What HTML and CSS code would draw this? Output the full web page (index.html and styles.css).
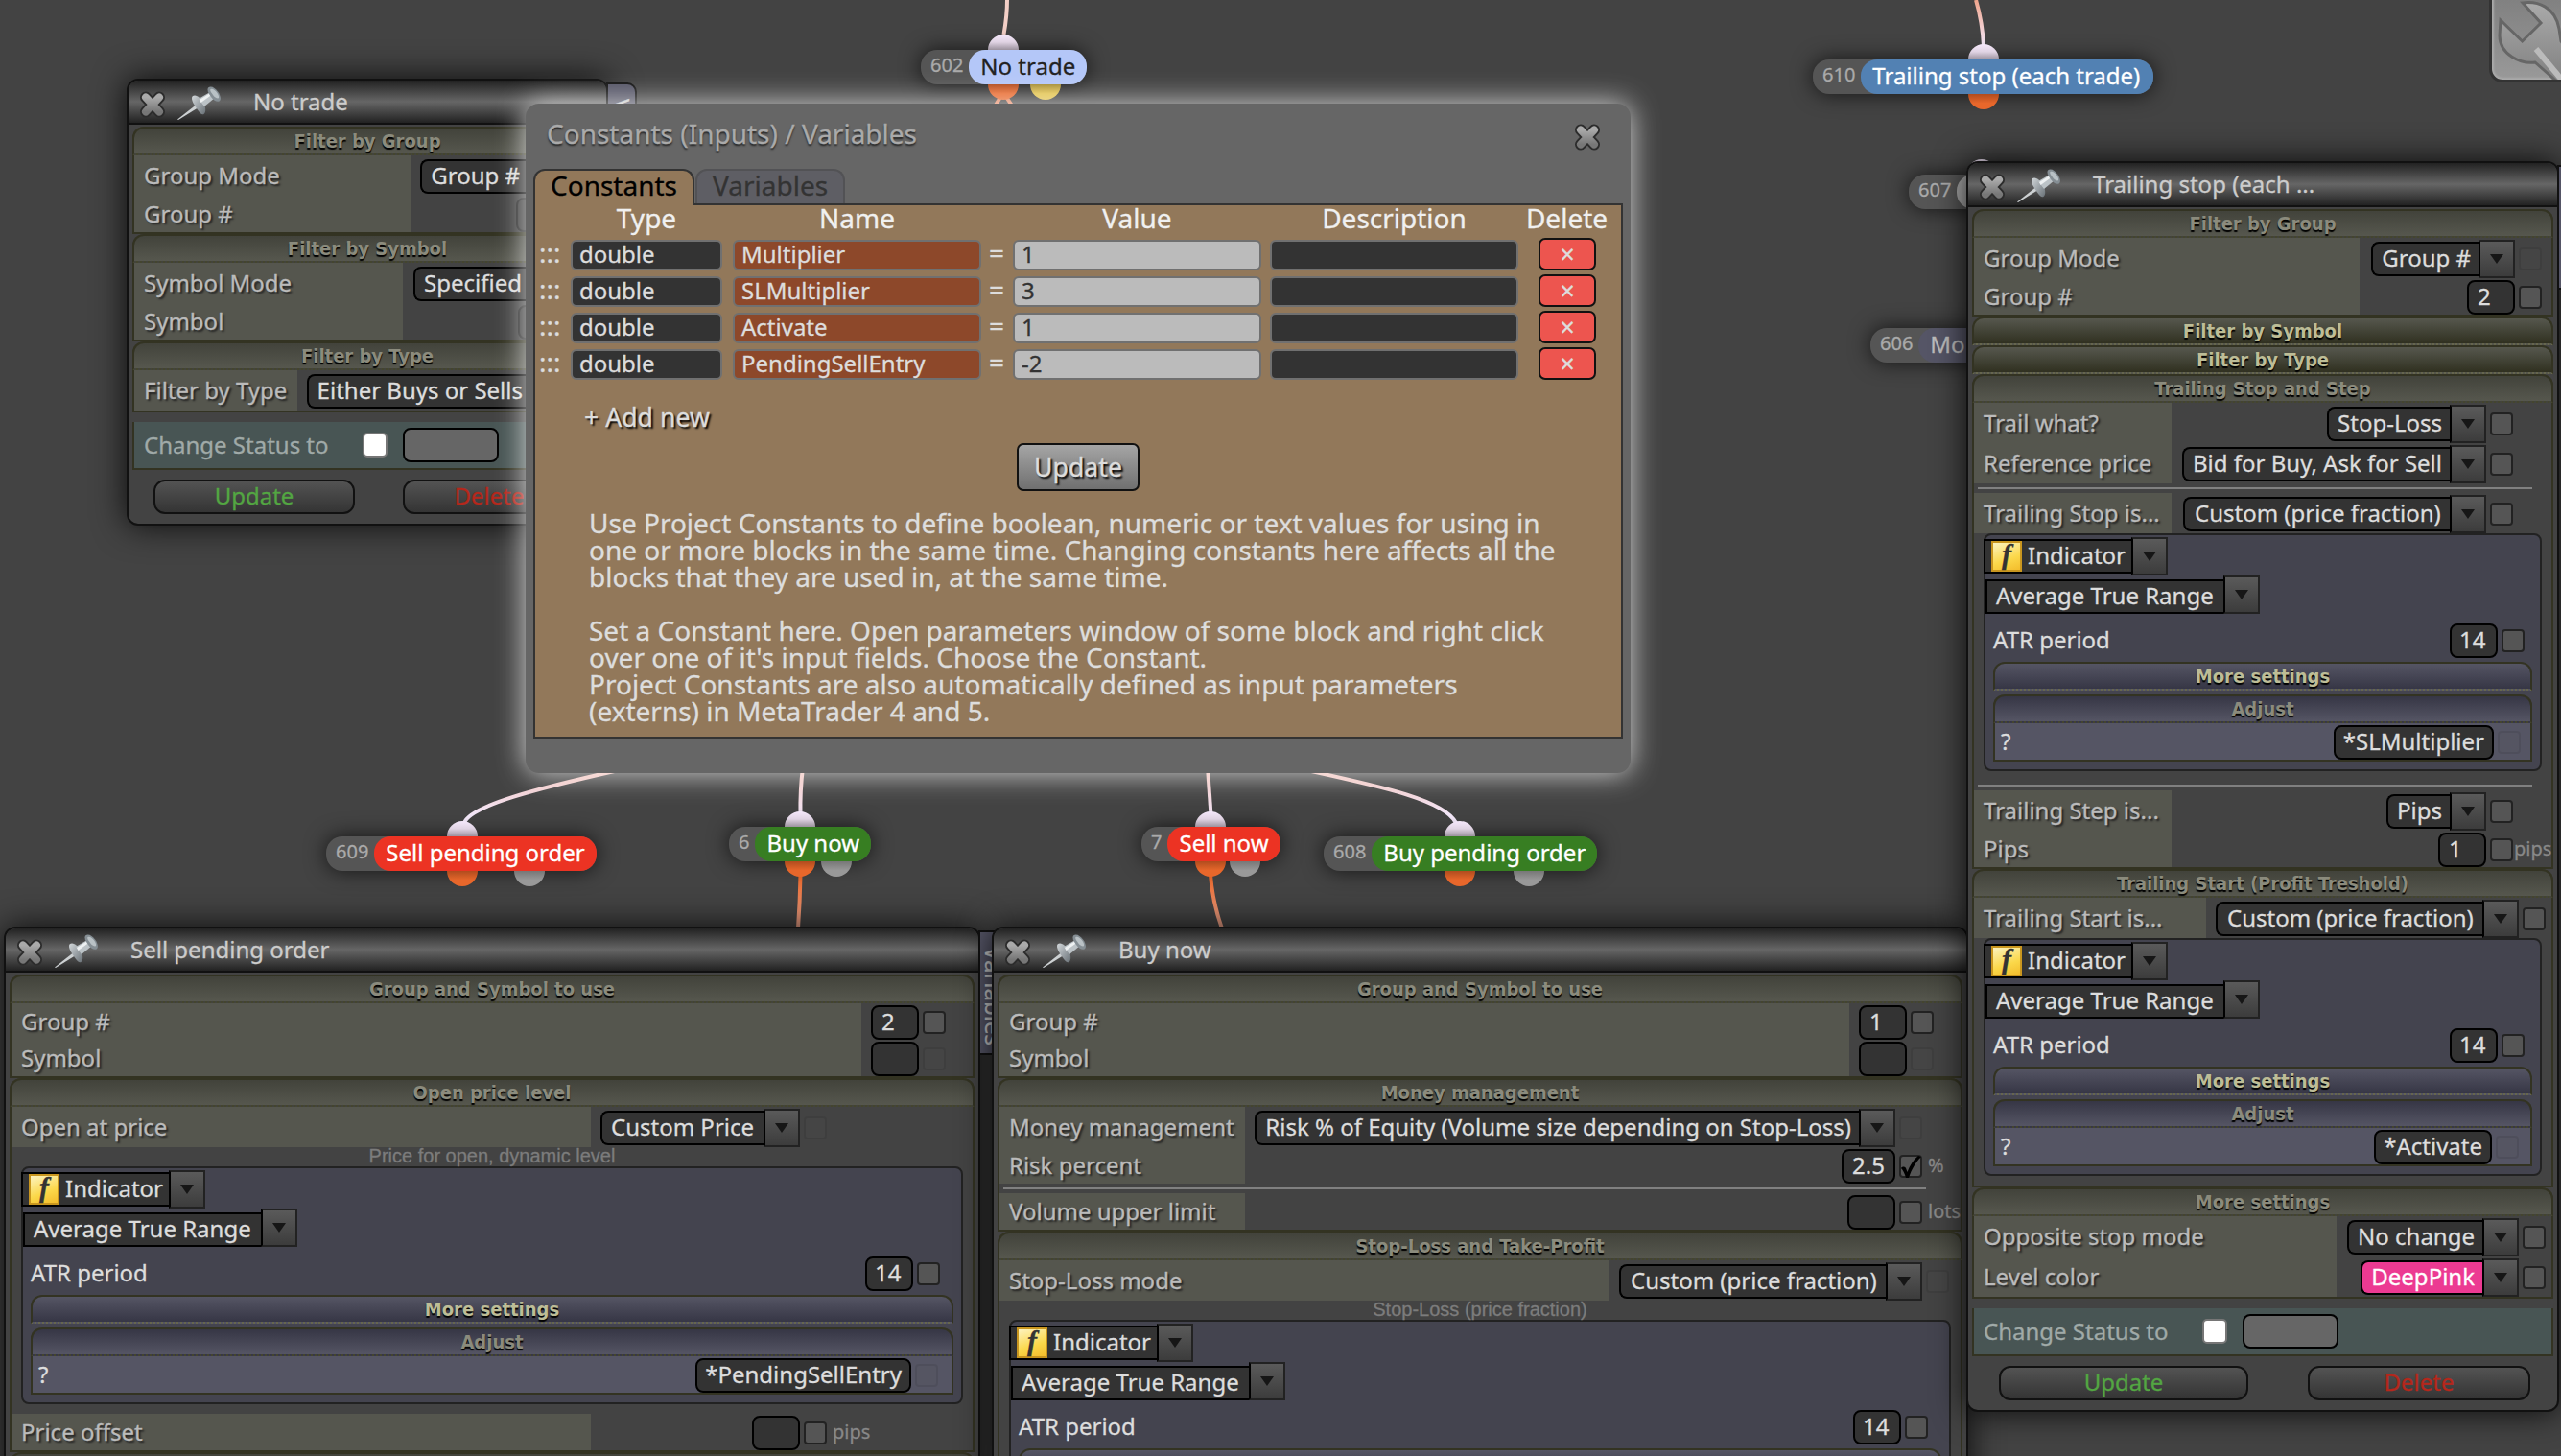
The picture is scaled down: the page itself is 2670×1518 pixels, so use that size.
FILE: index.html
```html
<!DOCTYPE html>
<html lang="en">
<head>
  <meta charset="UTF-8" />
  <title>Constants (Inputs) / Variables</title>
  <link rel="stylesheet" href="styles.css">
</head>
<body>
<div class="canvas">

  <svg class="defs" width="0" height="0">
    <defs>
      <linearGradient id="metal" x1="0" y1="0" x2="0" y2="1">
        <stop offset="0" stop-color="#aaa"/><stop offset="1" stop-color="#777"/>
      </linearGradient>
      <linearGradient id="pin-metal" x1="0" y1="0" x2="1" y2="1">
        <stop offset="0" stop-color="#d3d8db"/><stop offset="1" stop-color="#687076"/>
      </linearGradient>
      <linearGradient id="wire-in" x1="0" y1="0" x2="0" y2="1">
        <stop offset="0" stop-color="#f0a58c"/><stop offset="1" stop-color="#f4e8fa"/>
      </linearGradient>
      <linearGradient id="wire-mid" gradientUnits="userSpaceOnUse" x1="0" y1="790" x2="0" y2="850">
        <stop offset="0" stop-color="#f0b5a5"/><stop offset="1" stop-color="#f4e8fa"/>
      </linearGradient>
      <linearGradient id="wire-out" gradientUnits="userSpaceOnUse" x1="0" y1="914" x2="0" y2="966">
        <stop offset="0" stop-color="#e8672b"/><stop offset="1" stop-color="#f0a58c"/>
      </linearGradient>
    </defs>
    <symbol id="close" viewBox="0 0 30 30">
      <path d="M8 7.500 22 22.500M22 7.500 8 22.500" fill="none" stroke="#2c2c2c" stroke-width="12" stroke-linecap="round"/>
      <path d="M8 7.500 22 22.500M22 7.500 8 22.500" fill="none" stroke="url(#metal)" stroke-width="8" stroke-linecap="round"/>
    </symbol>
    <symbol id="pin" viewBox="0 0 46 36">
      <path d="M1 34.500 22 18l2.500 3L2 35z" fill="#cdd1d3"/>
      <path d="M16.500 10.500c3-2.500 7 0 10.500 5s4.500 11 1.500 13.500c-2 1-4-1-6.500-4.500-3-4-7.500-11-5.500-14z" fill="url(#pin-metal)"/>
      <path d="M23 13 35 6l5 6-11 9z" fill="#bcc3c7"/>
      <path d="M24 14 35 7l1.500 2-11 8z" fill="#eef1f2"/>
      <path d="M33 1.500c3-2.500 7 0 10 4s4 8.500 1.500 10c-3 1-6-1-8.500-4.500s-4.500-7-3-9.500z" fill="#858e94"/>
      <path d="M35.500 3c2-1 5 1 7 4s2 5 1 5.500-4-1-5.500-3.500-3.500-4.500-2.500-6z" fill="#b9c1c5"/>
    </symbol>
    <symbol id="check" viewBox="0 0 24 24">
      <path d="M2 13c1-2 4-2 5 0l1.500 4C11 10 15 4 20 0l3 1C17 7 13 14 10 23H7C6 19 4 15 2 13z"/>
    </symbol>
  </svg>

  <!-- wires between the blocks -->
  <svg class="wires" width="2670" height="1518">
    <path d="M1050 0Q1050 16 1046.500 36" stroke="#f3cfc6"/>
    <path d="M1045 98 1034 116M1047 98 1059 116" stroke="#f0906a"/>
    <path d="M2060 0Q2067 24 2068 48" stroke="url(#wire-in)"/>
    <path d="M645 803C560 822 490 840 484 858" stroke="url(#wire-mid)"/>
    <path d="M837 800Q834 824 834.500 850" stroke="url(#wire-mid)"/>
    <path d="M1259 800 1262.500 850" stroke="url(#wire-mid)"/>
    <path d="M1362 803C1440 820 1506 834 1518 858" stroke="url(#wire-mid)"/>
    <path d="M834.500 912Q834 940 832 968" stroke="url(#wire-out)"/>
    <path d="M1262 912Q1264 940 1274 968" stroke="url(#wire-out)"/>
  </svg>

  <div class="node n602"><i class="port in"></i><i class="port out"></i><i class="port yellow"></i><span class="num">602</span><span class="name lightblue">No trade</span></div>
  <div class="node n610"><i class="port in"></i><i class="port out"></i><span class="num">610</span><span class="name blue">Trailing stop (each trade)</span></div>
  <div class="node n607"><i class="port in"></i><span class="num">607</span><span class="name gray"></span></div>
  <div class="node n606"><span class="num">606</span><span class="name slate">Mo</span></div>
  <div class="node n609"><i class="port in"></i><i class="port out"></i><i class="port off"></i><span class="num">609</span><span class="name red">Sell pending order</span></div>
  <div class="node n6"><i class="port in"></i><i class="port out"></i><i class="port off"></i><span class="num">6</span><span class="name green">Buy now</span></div>
  <div class="node n7"><i class="port in"></i><i class="port out"></i><i class="port off"></i><span class="num">7</span><span class="name red">Sell now</span></div>
  <div class="node n608"><i class="port in"></i><i class="port out"></i><i class="port off"></i><span class="num">608</span><span class="name green">Buy pending order</span></div>

  <div class="tools">
    <svg width="110" height="90" viewBox="0 0 110 90">
      <path d="M9 20 31.600 42 51 23 32 2C48 0 66 6 70 29l2 13 30 40-16 20-24-23-17-15C30 66 8 56 8 36z" fill="url(#metal)" stroke="#666" stroke-width="3"/>
      <path d="M46 50 86 98" stroke="#bbb" stroke-width="6"/>
    </svg>
  </div>

  <!-- No trade -->
  <div class="window w-notrade">
    <div class="side-tab">Variables</div>
    <div class="window-body">
      <div class="titlebar"><svg class="close"><use href="#close"/></svg><svg class="pin"><use href="#pin"/></svg><span>No trade</span></div>
      <div class="section s1">
        <div class="head">Filter by Group</div>
        <div class="row sel"><label>Group Mode</label><div class="ctl"><div class="select"><span>Group #</span><b></b></div><i class="cb off"></i></div><em></em></div>
        <div class="row"><label>Group #</label><div class="ctl"><span class="field disabled"></span><i class="cb off"></i></div><em></em></div>
      </div>
      <div class="section s2">
        <div class="head">Filter by Symbol</div>
        <div class="row sel"><label>Symbol Mode</label><div class="ctl"><div class="select"><span>Specified</span><b></b></div><i class="cb off"></i></div><em></em></div>
        <div class="row"><label>Symbol</label><div class="ctl"><span class="field disabled"></span><i class="cb off"></i></div><em></em></div>
      </div>
      <div class="section s3">
        <div class="head">Filter by Type</div>
        <div class="row sel"><label>Filter by Type</label><div class="ctl"><div class="select"><span>Either Buys or Sells</span><b></b></div><i class="cb off"></i></div><em></em></div>
      </div>
      <div class="status"><label>Change Status to</label><i class="white-cb"></i><span class="status-box"></span></div>
      <div class="buttons"><button class="update">Update</button><button class="delete">Delete</button></div>
    </div>
  </div>

  <!-- Sell pending order -->
  <div class="window w-sell">
    <div class="side-tab">Variables</div>
    <div class="window-body">
      <div class="titlebar"><svg class="close"><use href="#close"/></svg><svg class="pin"><use href="#pin"/></svg><span>Sell pending order</span></div>
      <div class="section group">
        <div class="head">Group and Symbol to use</div>
        <div class="row"><label>Group #</label><div class="ctl"><span class="field">2</span><i class="cb"></i></div><em></em></div>
        <div class="row"><label>Symbol</label><div class="ctl"><span class="field"></span><i class="cb off"></i></div><em></em></div>
      </div>
      <div class="section price">
        <div class="head">Open price level</div>
        <div class="row sel"><label>Open at price</label><div class="ctl"><div class="select"><span class="custom">Custom Price</span><b></b></div><i class="cb off"></i></div><em></em></div>
        <div class="caption">Price for open, dynamic level</div>
        <div class="indicator">
          <div class="pick first"><div class="select"><span class="ind"><i class="fx">f</i>Indicator</span><b></b></div></div>
          <div class="pick"><div class="select"><span class="atr">Average True Range</span><b></b></div></div>
          <div class="row period"><label>ATR period</label><div class="ctl"><span class="field">14</span><i class="cb"></i></div></div>
          <div class="head closed">More settings</div>
          <div class="adjust">
            <div class="head">Adjust</div>
            <div class="row"><label>?</label><div class="ctl"><span class="field const">*PendingSellEntry</span><i class="cb off"></i></div></div>
          </div>
        </div>
        <div class="row"><label>Price offset</label><div class="ctl"><span class="field"></span><i class="cb"></i></div><em>pips</em></div>
      </div>
      <div class="section"><div class="head"></div></div>
    </div>
  </div>

  <!-- Buy now -->
  <div class="window w-buy">
    <div class="window-body">
      <div class="titlebar"><svg class="close"><use href="#close"/></svg><svg class="pin"><use href="#pin"/></svg><span>Buy now</span></div>
      <div class="section group">
        <div class="head">Group and Symbol to use</div>
        <div class="row"><label>Group #</label><div class="ctl"><span class="field">1</span><i class="cb"></i></div><em></em></div>
        <div class="row"><label>Symbol</label><div class="ctl"><span class="field"></span><i class="cb off"></i></div><em></em></div>
      </div>
      <div class="section money">
        <div class="head">Money management</div>
        <div class="row sel"><label>Money management</label><div class="ctl"><div class="select"><span>Risk % of Equity (Volume size depending on Stop-Loss)</span><b></b></div><i class="cb off"></i></div><em></em></div>
        <div class="row"><label>Risk percent</label><div class="ctl"><span class="field">2.5</span><i class="cb"><svg><use href="#check"/></svg></i></div><em>%</em></div>
        <hr>
        <div class="row"><label>Volume upper limit</label><div class="ctl"><span class="field"></span><i class="cb"></i></div><em>lots</em></div>
      </div>
      <div class="section stoploss">
        <div class="head">Stop-Loss and Take-Profit</div>
        <div class="row sel"><label>Stop-Loss mode</label><div class="ctl"><div class="select"><span class="fraction">Custom (price fraction)</span><b></b></div><i class="cb off"></i></div><em></em></div>
        <div class="caption">Stop-Loss (price fraction)</div>
        <div class="indicator">
          <div class="pick first"><div class="select"><span class="ind"><i class="fx">f</i>Indicator</span><b></b></div></div>
          <div class="pick"><div class="select"><span class="atr">Average True Range</span><b></b></div></div>
          <div class="row period"><label>ATR period</label><div class="ctl"><span class="field">14</span><i class="cb"></i></div></div>
          <div class="head closed"></div>
        </div>
      </div>
    </div>
  </div>

  <!-- Trailing stop -->
  <div class="window w-trail">
    <div class="side-tab"></div>
    <div class="window-body">
      <div class="titlebar"><svg class="close"><use href="#close"/></svg><svg class="pin"><use href="#pin"/></svg><span>Trailing stop (each ...</span></div>
      <div class="section t1">
        <div class="head">Filter by Group</div>
        <div class="row sel"><label>Group Mode</label><div class="ctl"><div class="select"><span>Group #</span><b></b></div><i class="cb off"></i></div><em></em></div>
        <div class="row"><label>Group #</label><div class="ctl"><span class="field">2</span><i class="cb"></i></div><em></em></div>
      </div>
      <div class="head closed">Filter by Symbol</div>
      <div class="head closed">Filter by Type</div>
      <div class="section t2">
        <div class="head">Trailing Stop and Step</div>
        <div class="row sel"><label>Trail what?</label><div class="ctl"><div class="select"><span>Stop-Loss</span><b></b></div><i class="cb"></i></div><em></em></div>
        <div class="row sel"><label>Reference price</label><div class="ctl"><div class="select"><span>Bid for Buy, Ask for Sell</span><b></b></div><i class="cb"></i></div><em></em></div>
        <hr>
        <div class="row sel"><label>Trailing Stop is...</label><div class="ctl"><div class="select"><span class="fraction">Custom (price fraction)</span><b></b></div><i class="cb"></i></div><em></em></div>
        <div class="indicator">
          <div class="pick first"><div class="select"><span class="ind"><i class="fx">f</i>Indicator</span><b></b></div></div>
          <div class="pick"><div class="select"><span class="atr">Average True Range</span><b></b></div></div>
          <div class="row period"><label>ATR period</label><div class="ctl"><span class="field">14</span><i class="cb"></i></div></div>
          <div class="head closed">More settings</div>
          <div class="adjust">
            <div class="head">Adjust</div>
            <div class="row"><label>?</label><div class="ctl"><span class="field const">*SLMultiplier</span><i class="cb off"></i></div></div>
          </div>
        </div>
        <hr>
        <div class="row sel"><label>Trailing Step is...</label><div class="ctl"><div class="select"><span>Pips</span><b></b></div><i class="cb"></i></div><em></em></div>
        <div class="row"><label>Pips</label><div class="ctl"><span class="field">1</span><i class="cb"></i></div><em>pips</em></div>
      </div>
      <div class="section t3">
        <div class="head">Trailing Start (Profit Treshold)</div>
        <div class="row sel"><label>Trailing Start is...</label><div class="ctl"><div class="select"><span class="fraction">Custom (price fraction)</span><b></b></div><i class="cb"></i></div><em></em></div>
        <div class="indicator">
          <div class="pick first"><div class="select"><span class="ind"><i class="fx">f</i>Indicator</span><b></b></div></div>
          <div class="pick"><div class="select"><span class="atr">Average True Range</span><b></b></div></div>
          <div class="row period"><label>ATR period</label><div class="ctl"><span class="field">14</span><i class="cb"></i></div></div>
          <div class="head closed">More settings</div>
          <div class="adjust">
            <div class="head">Adjust</div>
            <div class="row"><label>?</label><div class="ctl"><span class="field const">*Activate</span><i class="cb off"></i></div></div>
          </div>
        </div>
      </div>
      <div class="section t4">
        <div class="head">More settings</div>
        <div class="row sel"><label>Opposite stop mode</label><div class="ctl"><div class="select"><span>No change</span><b></b></div><i class="cb"></i></div><em></em></div>
        <div class="row sel"><label>Level color</label><div class="ctl"><div class="select"><span class="pink">DeepPink</span><b></b></div><i class="cb"></i></div><em></em></div>
      </div>
      <div class="status"><label>Change Status to</label><i class="white-cb"></i><span class="status-box"></span></div>
      <div class="buttons"><button class="update">Update</button><button class="delete">Delete</button></div>
    </div>
  </div>

  <!-- Constants dialog -->
  <div class="dialog">
    <div class="dialog-title"><span>Constants (Inputs) / Variables</span><svg><use href="#close"/></svg></div>
    <div class="tabs"><div class="tab active">Constants</div><div class="tab">Variables</div></div>
    <div class="panel">
      <div class="const-row titles"><span></span><span>Type</span><span>Name</span><span></span><span>Value</span><span>Description</span><span>Delete</span></div>
      <div class="const-row"><span class="grip">:::</span><span class="inp">double</span><span class="inp name">Multiplier</span><span class="eq">=</span><span class="inp value">1</span><span class="inp"></span><button>×</button></div>
      <div class="const-row"><span class="grip">:::</span><span class="inp">double</span><span class="inp name">SLMultiplier</span><span class="eq">=</span><span class="inp value">3</span><span class="inp"></span><button>×</button></div>
      <div class="const-row"><span class="grip">:::</span><span class="inp">double</span><span class="inp name">Activate</span><span class="eq">=</span><span class="inp value">1</span><span class="inp"></span><button>×</button></div>
      <div class="const-row"><span class="grip">:::</span><span class="inp">double</span><span class="inp name">PendingSellEntry</span><span class="eq">=</span><span class="inp value">-2</span><span class="inp"></span><button>×</button></div>
      <div class="add-new">+ Add new</div>
      <button class="save">Update</button>
      <p>
        Use Project Constants to define boolean, numeric or text values for using in<br>
        one or more blocks in the same time. Changing constants here affects all the<br>
        blocks that they are used in, at the same time.<br>
        <br>
        Set a Constant here. Open parameters window of some block and right click<br>
        over one of it's input fields. Choose the Constant.<br>
        Project Constants are also automatically defined as input parameters<br>
        (externs) in MetaTrader 4 and 5.
      </p>
    </div>
  </div>

</div>
</body>
</html>
```
FILE: styles.css
```css
* {
  box-sizing: border-box;
}

body {
  margin: 0;
  background: #434343;
  color: #ddd;
  font-family: "Noto Sans", sans-serif;
  font-size: 24px;
  -webkit-text-stroke: 0.3px;
}

.canvas {
  position: relative;
  width: 2670px;
  height: 1518px;
  overflow: hidden;
}

i, em {
  font-style: normal;
}

.defs, .wires {
  position: absolute;
  left: 0;
  top: 0;
}

.wires path {
  fill: none;
  stroke-width: 4;
}

/* blocks on the canvas */
.node {
  position: absolute;
  display: flex;
  height: 36px;
  border-radius: 17px;
  background: #555;
  box-shadow: 0 0 22px rgba(0,0,0,0.7);
  white-space: nowrap;
}

.node .num {
  padding: 0 6px 0 10px;
  font-size: 20px;
  line-height: 32px;
  color: #aaa;
}

.node .name {
  padding: 0 12px;
  border-radius: 17px;
  line-height: 33px;
  color: #fff;
}

.name.lightblue { background: #b4c7f8; color: #222; }
.name.blue { padding-right: 14px; background: #5281b3; }
.name.red { background: #ec3323; }
.name.green { background: #377e22; }
.name.slate { min-width: 80px; background: #555566; color: #bbb; }
.name.gray { min-width: 80px; background: #aaa; }

.port {
  position: absolute;
  left: var(--p);
  width: 32px;
  height: 16px;
}

.port.in {
  top: -16px;
  border-radius: 16px 16px 0 0;
  background: linear-gradient(#f5e8fb, #e0d3e3 50%, #9c929e);
}

.port.out, .port.yellow, .port.off {
  top: 36px;
  border-radius: 0 0 16px 16px;
  background: linear-gradient(#b04c1e, #e8672b 60%);
}

.port.yellow { left: var(--q); background: linear-gradient(#a58d36, #e2c24c 60%); }
.port.off { left: var(--q); background: linear-gradient(#777, #999 60%); }

.n602 { left: 960px; top: 52px; --p: 70px; --q: 114px; }
.n610 { left: 1890px; top: 62px; --p: 162px; }
.n607 { left: 1990px; top: 182px; --p: 60px; }
.n606 { left: 1950px; top: 342px; }
.n609 { left: 340px; top: 872px; --p: 126px; --q: 196px; }
.n6 { left: 760px; top: 862px; --p: 58px; --q: 96px; }
.n7 { left: 1190px; top: 862px; --p: 56px; --q: 92px; }
.n608 { left: 1380px; top: 872px; --p: 126px; --q: 198px; }

.tools {
  position: absolute;
  left: 2595px;
  top: -20px;
  width: 110px;
  height: 106px;
  padding-top: 18px;
  overflow: hidden;
  border: 3px solid #333;
  border-radius: 14px;
  background: linear-gradient(#7c7c7c, #999);
  box-shadow: inset 0 0 2px 2px #aaa;
}

/* block windows */
.window {
  position: absolute;
  z-index: 0;
}

.window-body {
  min-height: 100%;
  border: 2px solid #111;
  border-radius: 12px;
  background: #434343;
  box-shadow: 0 0 34px rgba(0,0,0,0.85);
}

.w-notrade { left: 132px; top: 82px; width: 502px; }
.w-sell { left: 4px; top: 966px; width: 1018px; }
.w-buy { left: 1034px; top: 966px; width: 1018px; }
.w-trail { left: 2050px; top: 168px; width: 618px; }

.side-tab {
  position: absolute;
  left: calc(100% - 2px);
  top: 4px;
  width: 32px;
  height: 130px;
  padding-top: 15px;
  border: 2px solid #111;
  border-radius: 0 10px 10px 0;
  background: #555566;
  color: #ccc;
  line-height: 28px;
  writing-mode: vertical-rl;
}

.titlebar {
  display: flex;
  height: 46px;
  margin-bottom: 2px;
  padding-left: 10px;
  border-bottom: 2px solid #111;
  border-radius: 10px 10px 0 0;
  background: linear-gradient(#222, #666 50%, #222);
  color: #ccc;
  line-height: 43px;
}

.titlebar .close {
  width: 30px;
  height: 30px;
  margin: 10px 10px 0 0;
}

.titlebar .pin {
  width: 46px;
  height: 36px;
  margin: 6px 34px 0 0;
}

.section, .window-body > .head {
  margin: 0 4px;
}

.section {
  border: solid #333322;
  border-width: 0 2px 2px;
  border-radius: 12px 12px 0 0;
}

.section > .head {
  margin: 0 -2px;
}

.head {
  height: 30px;
  border: 2px solid #333322;
  border-bottom: 2px dotted #44452f;
  border-radius: 12px 12px 0 0;
  background: linear-gradient(#42433b, #56574e);
  color: #8b8b7d;
  font: bold 20px/27px "DejaVu Sans Condensed", "DejaVu Sans", sans-serif;
  font-stretch: condensed;
  text-align: center;
  text-shadow: 0 2px 1px #000;
  -webkit-text-stroke: 0;
}

.head.closed {
  border-bottom-color: #66664e;
  background: linear-gradient(#56574e, #303020);
  color: #bdbd97;
}

.row {
  display: flex;
  height: 38px;
  line-height: 37px;
}

.row.sel {
  height: 42px;
  line-height: 41px;
}

.row label {
  width: var(--label);
  padding-left: 10px;
  background: #55564e;
  color: #bbb;
  text-shadow: 2px 2px 2px #222;
  white-space: nowrap;
}

.row em {
  width: var(--unit);
  padding-left: var(--unit-gap, 6px);
  color: #888;
  font-size: 20px;
}

.ctl {
  flex: 1;
  display: flex;
  justify-content: flex-end;
  align-items: center;
  gap: 4px;
  padding-top: 2px;
}

.field, .select span {
  height: 36px;
  border: 2px solid #000;
  border-radius: 8px;
  background: #333;
  line-height: 29px;
  color: #ddd;
  white-space: nowrap;
}

.field {
  min-width: 50px;
  padding: 0 9px;
}

.field.const {
  padding: 0 8px;
}

.field.disabled {
  opacity: 0.4;
}

.select {
  display: flex;
  align-items: center;
}

.select span {
  padding: 0 8px 0 9px;
  border-right: 0;
  border-radius: 8px 0 0 8px;
}

.select .custom { width: 170px; }
.select .fraction { width: 278px; padding-left: 10px; }

.select .pink {
  background: #ec3a92;
  color: #fff;
}

.select b {
  display: flex;
  width: 38px;
  height: 40px;
  border: 2px solid #222;
  border-left-color: #000;
  background: linear-gradient(#5a5a5a, #3c3c3c);
}

.select b::after {
  content: "";
  margin: auto;
  border: solid transparent;
  border-width: 10px 7px 0;
  border-top-color: #161616;
}

.cb {
  width: 24px;
  height: 24px;
  border: 2px solid #222;
  border-radius: 4px;
  background: #555;
}

.cb.off {
  opacity: 0.12;
}

.cb svg {
  display: block;
  width: 24px;
  height: 28px;
  margin: -3px 0 0 -2px;
}

hr {
  height: 2px;
  margin: 4px var(--hr) 4px 4px;
  border: 0;
  background: #808080;
}

.indicator + hr {
  margin-top: 14px;
}

.caption {
  height: 20px;
  font: 20px/19px "Liberation Sans", Arial, sans-serif;
  color: #7c7c7c;
  text-align: center;
}

/* column widths of each section */
.s1 { --label: 288px; --unit: 10px; }
.s2 { --label: 280px; --unit: 8px; }
.s3 { --label: 170px; --unit: 7px; }
.group { --label: 886px; --unit: 28px; }
.price { --label: 604px; --unit: 152px; }
.money { --label: 256px; --unit: 40px; --hr: 36px; }
.stoploss { --label: 636px; --unit: 12px; }
.t1 { --label: 402px; --unit: 10px; }
.t2 { --label: 206px; --unit: 40px; --unit-gap: 1px; --hr: 20px; --adj: 10px; }
.t3 { --label: 242px; --unit: 6px; --adj: 12px; }
.t4 { --label: 378px; --unit: 6px; }
.w-trail { --period: 8px; }
.w-sell, .w-buy { --period: 14px; --adj: 14px; }

.indicator {
  height: 248px;
  margin: 0 10px 10px;
  padding: 0 8px;
  border: 2px solid #222;
  border-radius: 8px;
  background: #44444f;
}

.pick {
  height: 40px;
  margin-left: -8px;
}

.pick.first {
  height: 42px;
  margin-left: -10px;
  padding-top: 2px;
}

.pick span {
  border-radius: 0;
}

.pick .ind {
  display: flex;
  width: 154px;
  padding: 0 0 0 6px;
}

.pick .atr {
  width: 248px;
  margin-top: 4px;
}

.pick .select {
  height: 40px;
}

.fx {
  width: 32px;
  height: 32px;
  margin-right: 6px;
  border: 2px solid #c9961f;
  background: linear-gradient(160deg, #fdf3c0, #fbd84a 60%, #f3bd2c);
  color: #333;
  font: italic bold 30px/24px "Liberation Serif", serif;
  text-align: center;
}

.indicator .row label {
  width: auto;
  padding: 0;
  background: none;
  color: #ddd;
  text-shadow: none;
}

.period {
  margin: 8px var(--period) 4px 0;
}

.period .field {
  padding: 0 8px;
}

.indicator .head {
  background: linear-gradient(#363645, #555564);
}

.indicator .head.closed {
  margin-bottom: 4px;
  background: linear-gradient(#555564, #363645);
}

.adjust {
  border: 2px solid #333322;
  border-top: 0;
  border-radius: 12px 12px 0 0;
  background: #555564;
}

.adjust .head {
  margin: 0 -2px;
}

.adjust .row {
  padding: 0 var(--adj) 0 6px;
}

.status {
  display: flex;
  align-items: center;
  height: 50px;
  margin: 10px 4px;
  padding-left: 10px;
  border: 2px solid #333322;
  border-top: 0;
  background: #485554;
}

.status label {
  width: 228px;
  margin-top: -2px;
  color: #a0aaa8;
}

.white-cb {
  width: 26px;
  height: 26px;
  margin-right: 16px;
  border: 2px solid #767676;
  border-radius: 5px;
  background: #fff;
}

.status-box {
  width: 100px;
  height: 36px;
  border: 2px solid #000;
  border-radius: 8px;
  background: #666;
}

.buttons {
  display: flex;
  justify-content: space-between;
  margin: 0 28px 10px 26px;
}

.buttons button {
  width: 210px;
  height: 36px;
  padding: 0 0 2px;
  border: 2px solid #111;
  border-radius: 12px;
  background: linear-gradient(#535353, #343434);
  font: 24px/28px "Noto Sans", sans-serif;
}

.buttons .update { color: #53a642; }
.buttons .delete { color: #b5271b; }

.w-notrade .buttons { gap: 50px; justify-content: flex-start; }
.w-notrade .buttons .delete { width: 180px; }
.w-trail .buttons { margin-left: 32px; }
.w-trail .buttons .update { width: 260px; }
.w-trail .buttons .delete { width: 232px; }

/* constants dialog */
.dialog {
  position: absolute;
  z-index: 1;
  left: 548px;
  top: 108px;
  width: 1152px;
  height: 698px;
  padding: 0 8px;
  border-radius: 14px;
  background: #666;
  box-shadow: 0 0 30px rgba(255,255,255,0.8);
  font-size: 28px;
}

.dialog-title {
  display: flex;
  justify-content: space-between;
  height: 68px;
  padding: 0 22px 0 14px;
  color: #aaa;
  line-height: 63px;
  text-shadow: 0 2px 2px #222;
}

.dialog-title svg {
  width: 30px;
  height: 30px;
  margin-top: 20px;
}

.tabs {
  display: flex;
  gap: 1px;
  height: 36px;
}

.tab {
  height: 36px;
  padding: 0 16px;
  border: 2px solid #525255;
  border-bottom: 0;
  border-radius: 12px 12px 0 0;
  background: #5e5e64;
  color: #333;
  line-height: 31px;
}

.tab.active {
  position: relative;
  height: 38px;
  border-color: #333;
  background: #92785a;
  color: #000;
}

.panel {
  height: 558px;
  border: 2px solid #333;
  background: #92785a;
}

.const-row {
  display: grid;
  grid-template-columns: 37px 158px 270px 33px 259px 268px 81px;
  height: 38px;
  align-items: center;
}

.const-row > :nth-child(3) { margin-left: 11px; }
.const-row > :nth-child(6) { margin-left: 9px; }

.const-row > :nth-child(7) {
  margin-left: 21px;
}

.titles {
  height: 33px;
  align-items: start;
  line-height: 26px;
  color: #f0f0f0;
  text-align: center;
}

.titles > :nth-child(7) {
  margin: 0 -20px 0 0;
}

.inp {
  height: 32px;
  padding-left: 7px;
  border: 2px solid #707070;
  border-radius: 6px;
  background: #333;
  color: #ddd;
  font-size: 24px;
  line-height: 25px;
}

.inp.name { background: #8d482a; }
.inp.value { background: #bbb; color: #333; }

.grip {
  margin-top: -6px;
  padding-left: 4px;
  line-height: 28px;
}

.eq {
  margin-top: -6px;
  padding-left: 8px;
  line-height: 28px;
}

.const-row button {
  height: 34px;
  margin-top: -2px;
  padding: 0;
  border: 2px solid #111;
  border-radius: 7px;
  background: #ed554f;
  color: #ddd;
  font: 26.67px/26px "Noto Sans", sans-serif;
}

.add-new {
  margin: 18px 0 0 51px;
  font-size: 26.67px;
  line-height: 36px;
  text-shadow: 2px 2px 2px #000;
}

.save {
  display: block;
  width: 128px;
  height: 50px;
  margin: 9px 0 0 502px;
  padding: 0;
  border: 2px solid #111;
  border-radius: 7px;
  background: linear-gradient(#a5a5a5, #707070);
  color: #ddd;
  font: 26.67px/44px "Noto Sans", sans-serif;
  text-shadow: 2px 2px 2px #000;
}

.panel p {
  margin: 19px 0 0 56px;
  line-height: 28px;
  white-space: nowrap;
}
```
